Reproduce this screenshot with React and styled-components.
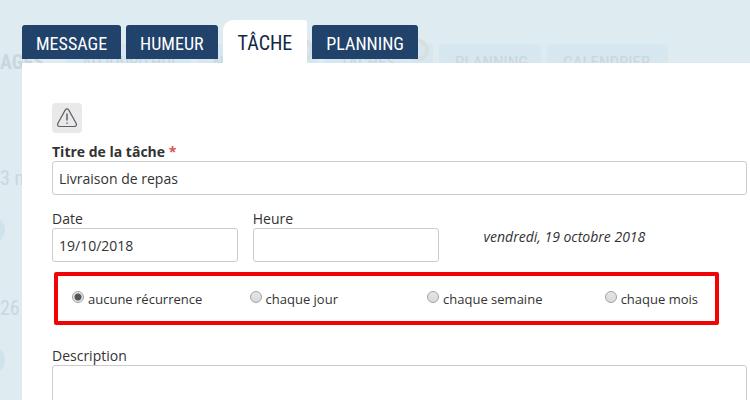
import React from 'react'
import styled, { createGlobalStyle } from 'styled-components'

const GlobalStyle = createGlobalStyle`
  * {
    box-sizing: border-box;
  }
  body {
    margin: 0;
    background-color: #deebf1;
    color: #333;
    font-family: "Open Sans", "Noto Sans", sans-serif;
    font-size: 14px;
    line-height: 20px;
    overflow: hidden;
  }
`;

const Page = styled.div`
  position: relative;
  min-height: 100vh;
  display: flex;
  overflow: hidden;
`;

/* faded page under the dialog */
const Backdrop = styled.div`
  position: absolute;
  inset: 0;
  padding-top: 44px;
  color: #c8d7de;
  font-family: "Roboto Condensed", "Roboto", sans-serif;
  font-size: 20px;
`;

const BackdropNav = styled.div`
  display: flex;
  gap: 6px;
  height: 36px;
  line-height: 36px;
  font-size: 17px;
`;

const BackdropTitle = styled.div`
  width: 60px;
  font-size: 20px;
  font-weight: bold;
`;

const BackdropTab = styled.div`
  position: relative;
  width: ${props => props.$width};
  padding-left: 16px;
  border-radius: 4px 4px 0 0;
  background-color: #d6e7ef;
  white-space: nowrap;
`;

const Badge = styled.span`
  position: absolute;
  top: -5px;
  right: 4px;
  width: 22px;
  height: 22px;
  border: 4px solid ${props => props.$color};
  border-radius: 50%;
`;

const BackdropEntry = styled.div`
  height: 130px;
  padding-top: 88px;
  line-height: 20px;
`;

const Dot = styled.div`
  width: 28px;
  height: 28px;
  margin: 28px 0 0 -23px;
  border-radius: 50%;
  background-color: #cfe3ec;
`;

const Dialog = styled.div`
  position: relative;
  flex: 1;
  display: flex;
  flex-direction: column;
  margin-left: 22px;
  padding-top: 20px;
`;

const Tabs = styled.div`
  display: flex;
  align-items: flex-start;
  gap: 5px;
  height: 43px;
`;

const Tab = styled.button`
  height: ${props => props.$active ? "43px" : "34px"};
  margin-top: ${props => props.$active ? "0" : "5px"};
  padding: ${props => props.$active ? "2px 15px 0" : "3px 14px 0"};
  border: none;
  border-radius: ${props => props.$active ? "10px 3px 0 0" : "3px 3px 0 0"};
  background-color: ${props => props.$active ? "#fff" : "#21426a"};
  color: ${props => props.$active ? "#132746" : "#fff"};
  font-family: "Roboto Condensed", "Roboto", sans-serif;
  font-size: ${props => props.$active ? "20px" : "18px"};
  cursor: pointer;
`;

const Panel = styled.form`
  flex: 1;
  display: flex;
  flex-direction: column;
  padding: 40px 3px 0 30px;
  background-color: #fff;
`;

const IconButton = styled.button`
  display: flex;
  align-items: center;
  justify-content: center;
  width: 30px;
  height: 30px;
  margin-bottom: 10px;
  padding: 0;
  border: none;
  border-radius: 4px;
  background-color: #e9e9e9;
  cursor: pointer;
`;

const Field = styled.div`
  display: flex;
  flex-direction: column;
`;

const Label = styled.label`
  font-weight: ${props => props.$bold ? "bold" : "normal"};
  line-height: 18px;
`;

const Required = styled.span`
  color: #d9534f;
`;

const Input = styled.input`
  width: 100%;
  height: 34px;
  padding: 1px 6px 0;
  border: 1px solid #ccc;
  border-radius: 3px;
  background-color: #fff;
  color: #333;
  font: inherit;
`;

const TextArea = styled.textarea`
  width: 100%;
  height: 80px;
  padding: 6px;
  border: 1px solid #ccc;
  border-radius: 3px;
  color: #333;
  font: inherit;
  resize: none;
`;

const DateRow = styled.div`
  display: grid;
  grid-template-columns: 19fr 19fr 30fr;
  gap: 15px;
  margin-top: 15px;
`;

const LongDate = styled.em`
  padding: 17px 0 0 30px;
`;

const Recurrence = styled.div`
  display: grid;
  grid-template-columns: repeat(3, 1fr) auto;
  align-items: center;
  height: 53px;
  margin: 10px 28px 22px 2px;
  padding: 0 17px 0 14px;
  border: 4px solid #f10306;
  border-radius: 2px;
`;

const RadioLabel = styled.label`
  display: flex;
  align-items: flex-start;
  gap: 4px;
  font-size: 13px;
  white-space: nowrap;
`;

const Radio = styled.input`
  appearance: none;
  width: 12px;
  height: 12px;
  margin: 2px 0 0;
  border: 1px solid #a3a3a3;
  border-radius: 50%;
  background: linear-gradient(#e6e6e6, #d9d9d9);
  &:checked {
    background: radial-gradient(circle, #555 0 3px, #e4e4e4 4px);
  }
`;

const WarningIcon = () => (
  <svg width="20" height="20" viewBox="0 0 20 20" fill="none" stroke="#5c6066" strokeWidth="1.2" strokeLinecap="round">
    <path d="M8.3 1.9 Q10 -0.1 11.7 1.9 L19.2 15.4 Q20 18.4 17.4 18.5 H2.6 Q0 18.4 0.8 15.4 Z" />
    <path d="M10 6 V12" strokeWidth="1.5" />
    <path d="M10 15 V15.2" strokeWidth="1.5" />
  </svg>
);

const tabs = ["MESSAGE", "HUMEUR", "TÂCHE", "PLANNING"];
const recurrences = ["aucune récurrence", "chaque jour", "chaque semaine", "chaque mois"];

const App = () => {
  const [tab, setTab] = React.useState("TÂCHE");
  const [recurrence, setRecurrence] = React.useState(recurrences[0]);

  return (
    <Page>
      <GlobalStyle />
      <Backdrop aria-hidden="true">
        <BackdropNav>
          <BackdropTitle>AGES</BackdropTitle>
          <BackdropTab $width="125px">AUJOURD'HUI</BackdropTab>
          <BackdropTab $width="121px">N<Badge $color="#d9dde3" /></BackdropTab>
          <BackdropTab $width="109px">TÂCHES<Badge $color="#dadfde" /></BackdropTab>
          <BackdropTab $width="102px">PLANNING</BackdropTab>
          <BackdropTab $width="121px">CALENDRIER</BackdropTab>
        </BackdropNav>
        <BackdropEntry>3 m<Dot /></BackdropEntry>
        <BackdropEntry>26<Dot /></BackdropEntry>
      </Backdrop>
      <Dialog>
        <Tabs>
          {tabs.map((name) => (
            <Tab key={name} $active={name === tab} onClick={() => setTab(name)}>{name}</Tab>
          ))}
        </Tabs>
        <Panel>
          <IconButton type="button" aria-label="Urgent"><WarningIcon /></IconButton>
          <Field>
            <Label $bold htmlFor="title">Titre de la tâche <Required>*</Required></Label>
            <Input id="title" defaultValue="Livraison de repas" />
          </Field>
          <DateRow>
            <Field>
              <Label htmlFor="date">Date</Label>
              <Input id="date" defaultValue="19/10/2018" />
            </Field>
            <Field>
              <Label htmlFor="hour">Heure</Label>
              <Input id="hour" />
            </Field>
            <LongDate>vendredi, 19 octobre 2018</LongDate>
          </DateRow>
          <Recurrence>
            {recurrences.map((name) => (
              <RadioLabel key={name}>
                <Radio
                  type="radio"
                  name="recurrence"
                  checked={name === recurrence}
                  onChange={() => setRecurrence(name)}
                />
                {name}
              </RadioLabel>
            ))}
          </Recurrence>
          <Field>
            <Label htmlFor="description">Description</Label>
            <TextArea id="description" />
          </Field>
        </Panel>
      </Dialog>
    </Page>
  )
}

export default App;
